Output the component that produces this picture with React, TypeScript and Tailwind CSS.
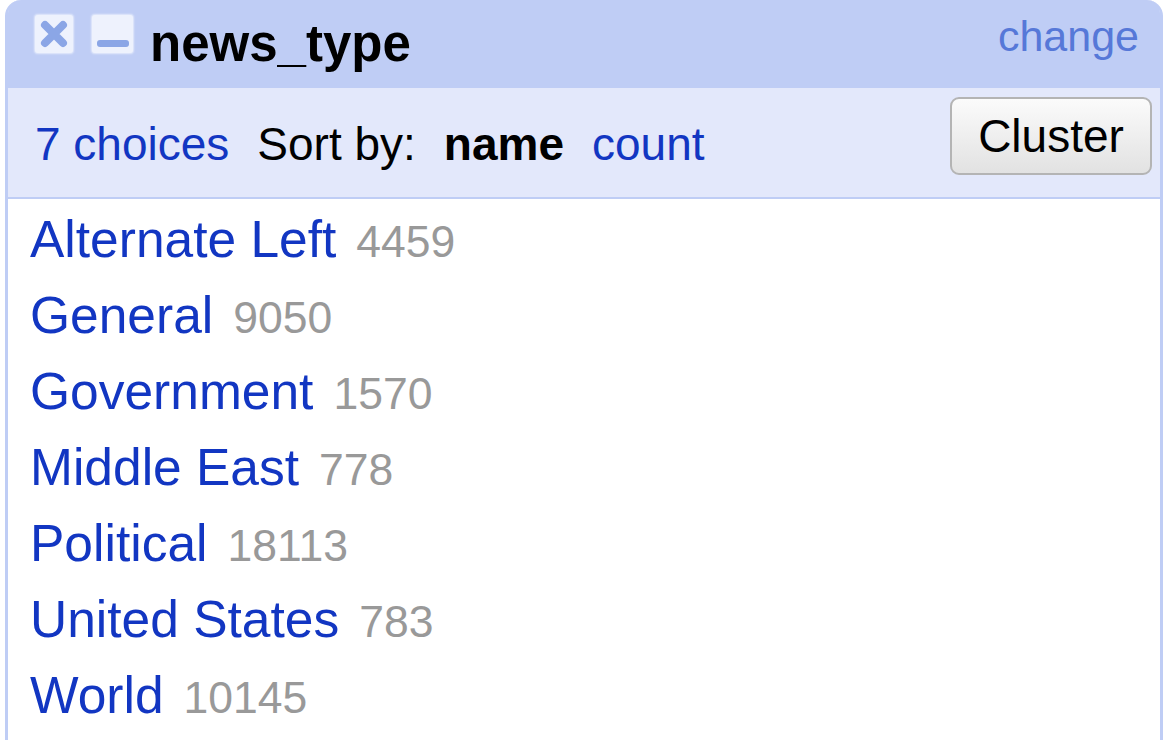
import React from "react";

const items: [string, string][] = [
  ["Alternate Left", "4459"],
  ["General", "9050"],
  ["Government", "1570"],
  ["Middle East", "778"],
  ["Political", "18113"],
  ["United States", "783"],
  ["World", "10145"],
];

export default function App() {
  return (
    <div
      className="min-h-screen bg-white pl-[5px]"
      style={{ fontFamily: '"Liberation Sans", Arial, Helvetica, sans-serif' }}
    >
      <div className="w-[1158px] rounded-t-[16px] border-x-[3px] border-[#bfcdf5] bg-white">
        {/* Header */}
        <div className="flex h-[88px] rounded-t-[13px] bg-[#bfcdf5] pl-[27px] pr-[21px]">
          <div className="mt-[15px] h-[38px] w-[38px] rounded-[3px] bg-[#eef2fd] shadow-[0_0_2px_1px_rgba(238,242,253,0.8)]">
            <svg width="38" height="38" viewBox="0 0 38 38">
              <path
                d="M10 10 L28 28 M28 10 L10 28"
                stroke="#8ba6e6"
                strokeWidth="8"
                strokeLinecap="round"
              />
            </svg>
          </div>
          <div className="ml-[19px] mt-[15px] flex h-[38px] w-[41px] items-end justify-center rounded-[3px] bg-[#eef2fd] pb-[6px] shadow-[0_0_2px_1px_rgba(238,242,253,0.8)]">
            <div className="h-[7px] w-[32px] rounded-[3px] bg-[#8ba6e6]" />
          </div>
          <div className="ml-[17px] text-[51px] font-bold leading-[88px] text-black">
            news_type
          </div>
          <div className="ml-auto text-[43px] leading-[72px] text-[#5678d8]">
            change
          </div>
        </div>
        {/* Controls */}
        <div className="flex h-[111px] border-b-[2px] border-[#bfcdf5] bg-[#e3e8fb] pl-[27px] pr-[8px]">
          <div className="mt-[33px] flex gap-[28px] whitespace-nowrap text-[46px] leading-[46px]">
            <span className="text-[#1236c2]">7 choices</span>
            <span className="text-black">Sort by:</span>
            <span className="font-bold text-black">name</span>
            <span className="text-[#1236c2]">count</span>
          </div>
          <button className="ml-auto mt-[9px] h-[78px] w-[202px] rounded-[9px] border-[2px] border-[#b4b4b4] bg-gradient-to-b from-[#fbfbfb] to-[#e2e2e2] text-[46px] leading-[46px] text-black">
            Cluster
          </button>
        </div>
        {/* List */}
        <div className="pb-[40px] pl-[22px] pt-[2px]">
          {items.map(([name, count]) => (
            <div key={name} className="h-[76px] whitespace-nowrap text-[51.5px] leading-[76px]">
              <span className="text-[#1236c2]">{name}</span>
              <span className="ml-[20px] text-[44.5px] text-[#999999]">{count}</span>
            </div>
          ))}
        </div>
      </div>
    </div>
  );
}
